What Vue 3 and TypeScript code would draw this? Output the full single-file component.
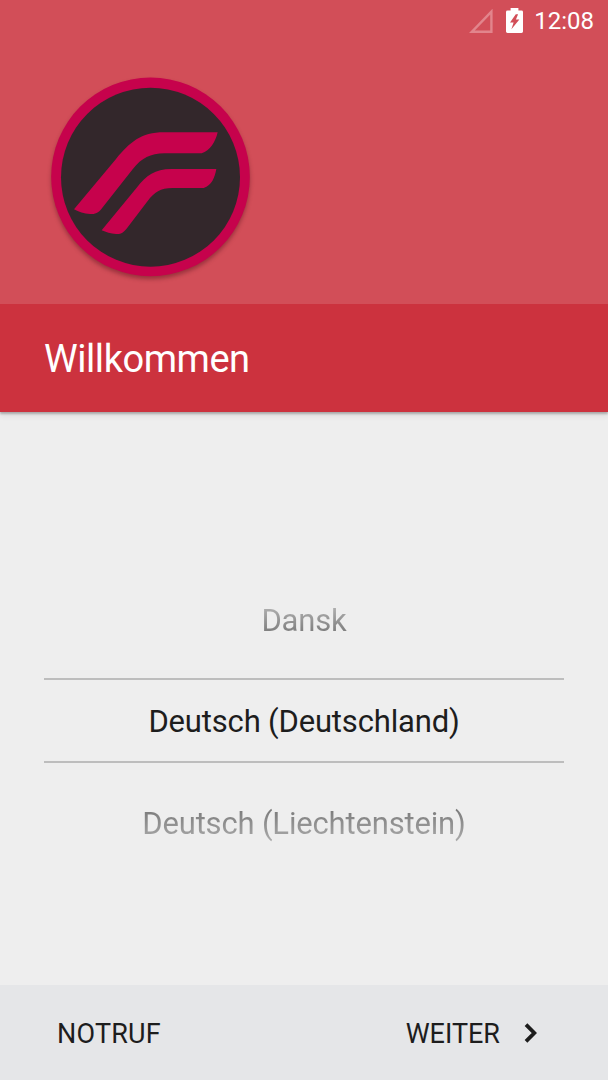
<script setup lang="ts">
interface Locale {
  label: string
  state: 'previous' | 'selected' | 'next'
}

const time = '12:08'
const title = 'Willkommen'
const locales: Locale[] = [
  { label: 'Dansk', state: 'previous' },
  { label: 'Deutsch (Deutschland)', state: 'selected' },
  { label: 'Deutsch (Liechtenstein)', state: 'next' },
]
</script>

<template>
  <main class="screen">
    <header class="hero">
      <div class="status">
        <svg class="signal" viewBox="0 0 24 25" aria-hidden="true">
          <path d="M22.4 2.6V22.8H2.8Z" />
        </svg>
        <svg class="battery" viewBox="0 0 17 25" aria-hidden="true">
          <path
            fill-rule="evenodd"
            d="M4.6 0H12.4V2.6H15.5Q17 2.6 17 4V23.6Q17 25 15.5 25H1.5Q0 25 0 23.6V4Q0 2.6 1.5 2.6H4.6ZM9.8 6.2L4 14.5H7.6L5.4 21.2L13.4 11.6H9.9L12.1 6.2Z"
          />
        </svg>
        <span class="clock">{{ time }}</span>
      </div>
      <svg class="logo" viewBox="0 0 660 675" aria-hidden="true">
        <circle class="ring" cx="331.5" cy="335.5" r="298" />
        <circle class="disc" cx="331.5" cy="336.5" r="268.5" />
        <path
          class="wing"
          d="M102 433L228 282C270 232 302 202 372 202H533C526 232 510 257 485 265H374C330 266 306 278 278 313L187 428C174 445 166 447 150 447C132 446 116 441 102 433Z"
        />
        <path
          class="wing"
          d="M185 496L290 368C320 331 344 312 394 312H529C524 338 516 361 491 369H398C360 369 344 381 323 408L262 488C248 506 240 507 228 507C212 506 198 502 185 496Z"
        />
      </svg>
    </header>

    <section class="title-bar">
      <h1>{{ title }}</h1>
    </section>

    <section class="picker">
      <div v-for="item in locales" :key="item.label" class="row" :class="item.state">
        <span>{{ item.label }}</span>
      </div>
    </section>

    <footer class="actions">
      <button type="button" class="emergency">NOTRUF</button>
      <button type="button" class="next-step">
        <span>WEITER</span>
        <svg class="chevron" viewBox="0 0 14 20" aria-hidden="true">
          <path d="M2 1.7L10.3 10L2 18.3" />
        </svg>
      </button>
    </footer>
  </main>
</template>

<style>
body {
  margin: 0;
}
</style>

<style scoped>
.screen {
  display: flex;
  flex-direction: column;
  width: 608px;
  height: 1080px;
  overflow: hidden;
  background: #eeeeee;
  color: #1d1d1d;
  font-family: Roboto, sans-serif;
}

.hero {
  flex: none;
  box-sizing: border-box;
  height: 304px;
  background: #d24e58;
}

.status {
  display: flex;
  align-items: center;
  justify-content: flex-end;
  box-sizing: border-box;
  height: 43px;
  padding-right: 14px;
  color: #ffffff;
}

.signal {
  width: 24px;
  height: 25px;
  margin-right: 13px;
}

.signal path {
  fill: none;
  stroke: #e2858c;
  stroke-width: 2.4;
}

.battery {
  width: 17px;
  height: 25px;
  margin: 0 11px 3px 0;
  fill: #ffffff;
}

.clock {
  font-size: 24px;
  line-height: 43px;
}

.logo {
  display: block;
  width: 220px;
  height: 225px;
  margin: 22px 0 0 40px;
  overflow: visible;
  filter: drop-shadow(0 3px 2px rgba(70, 10, 20, 0.4));
}

.ring,
.wing {
  fill: #c6024c;
}

.disc {
  fill: #33272b;
}

.title-bar {
  flex: none;
  display: flex;
  align-items: center;
  box-sizing: border-box;
  height: 108px;
  padding: 2px 0 0 44px;
  background: #cc323e;
  box-shadow: 0 2px 2px rgba(0, 0, 0, 0.25), 0 5px 5px rgba(0, 0, 0, 0.05);
}

h1 {
  margin: 0;
  color: #ffffff;
  font-size: 38px;
  font-weight: 400;
  line-height: 44px;
  letter-spacing: -0.45px;
}

.picker {
  flex: 1;
  display: grid;
  grid-template-rows: 114px 85px 120px;
  margin: 0 44px;
  padding-top: 152px;
}

.row {
  display: flex;
  align-items: center;
  justify-content: center;
  box-sizing: border-box;
  font-size: 31px;
  line-height: 40px;
  letter-spacing: -0.17px;
}

.selected {
  padding-top: 2px;
  border-top: 2px solid #bdbdbd;
  border-bottom: 2px solid #bdbdbd;
}

.previous span,
.next span {
  color: transparent;
  background-clip: text;
}

.previous span {
  background-image: linear-gradient(#b4b4b4 10%, #7c7c7c 80%);
}

.next {
  padding-top: 2px;
}

.next span {
  background-image: linear-gradient(#7c7c7c 15%, #acacac 95%);
}

.actions {
  flex: none;
  display: flex;
  align-items: center;
  justify-content: space-between;
  box-sizing: border-box;
  height: 95px;
  padding: 2px 70px 0 57px;
  background: #e5e6e8;
}

button {
  display: flex;
  align-items: center;
  padding: 0;
  border: 0;
  background: none;
  color: inherit;
  font: 400 27px/36px Roboto, sans-serif;
}

.emergency {
  letter-spacing: 0.2px;
}

.chevron {
  width: 14px;
  height: 20px;
  margin: 0 0 2px 24px;
}

.chevron path {
  fill: none;
  stroke: #1d1d1d;
  stroke-width: 3.8;
}
</style>
